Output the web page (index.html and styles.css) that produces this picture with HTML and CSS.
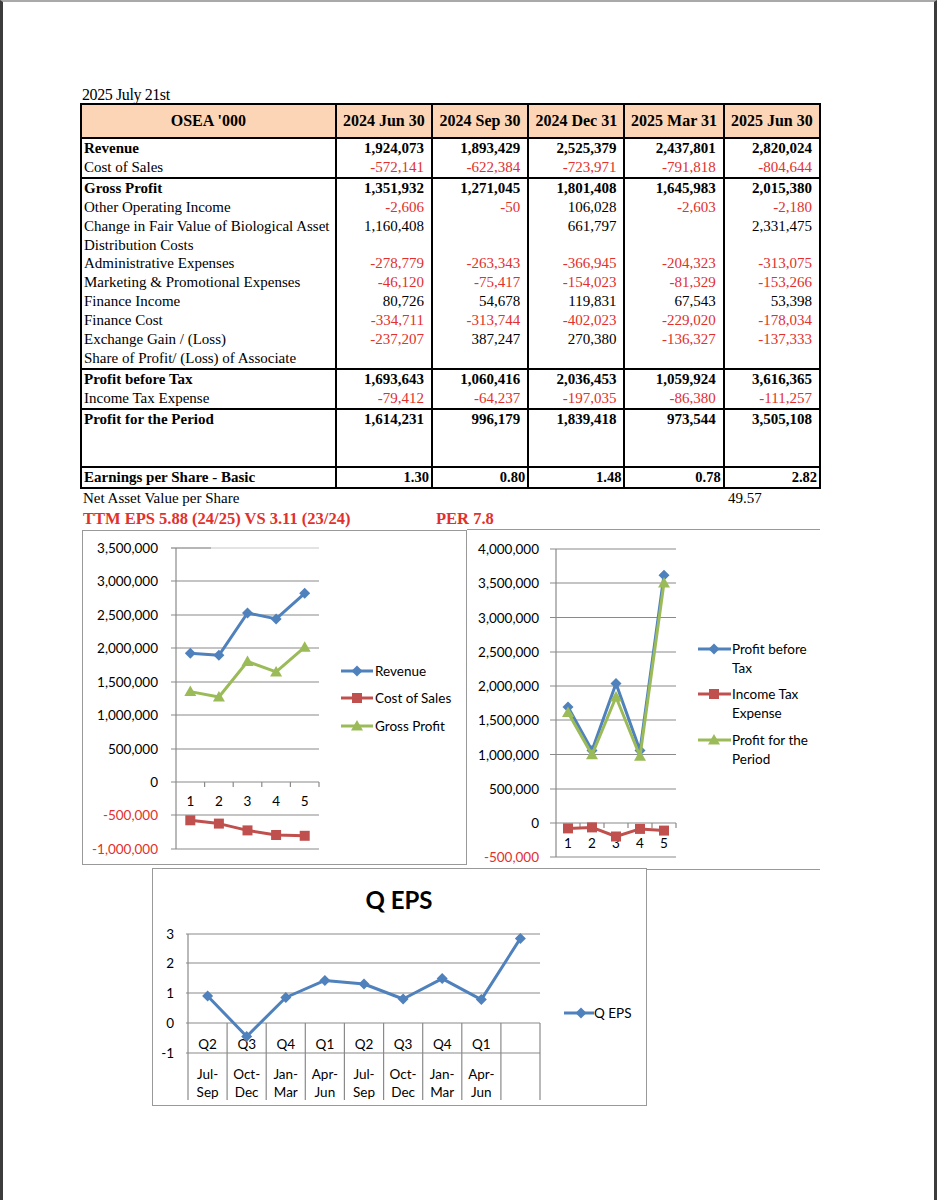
FILE: index.html
```html
<!DOCTYPE html>
<html lang="en">
<head>
    <meta charset="UTF-8">
    <meta name="viewport" content="width=device-width, initial-scale=1.0">
    <title>OSEA Quarterly Results</title>
    <link rel="stylesheet" href="styles.css">
</head>
<body>
<div class="page">
    <div class="sheet">
        <div class="date">2025 July 21st</div>

        <table class="results">
            <colgroup>
                <col class="c-label"><col class="c-q"><col class="c-q"><col class="c-q"><col class="c-q5"><col class="c-q">
            </colgroup>
            <thead>
                <tr>
                    <th>OSEA '000</th>
                    <th>2024 Jun 30</th>
                    <th>2024 Sep 30</th>
                    <th>2024 Dec 31</th>
                    <th>2025 Mar 31</th>
                    <th>2025 Jun 30</th>
                </tr>
            </thead>
            <tbody>
                <tr class="b"><td>Revenue</td><td>1,924,073</td><td>1,893,429</td><td>2,525,379</td><td>2,437,801</td><td>2,820,024</td></tr>
                <tr><td>Cost of Sales</td><td class="neg">-572,141</td><td class="neg">-622,384</td><td class="neg">-723,971</td><td class="neg">-791,818</td><td class="neg">-804,644</td></tr>
            </tbody>
            <tbody>
                <tr class="b"><td>Gross Profit</td><td>1,351,932</td><td>1,271,045</td><td>1,801,408</td><td>1,645,983</td><td>2,015,380</td></tr>
                <tr><td>Other Operating Income</td><td class="neg">-2,606</td><td class="neg">-50</td><td>106,028</td><td class="neg">-2,603</td><td class="neg">-2,180</td></tr>
                <tr><td>Change in Fair Value of Biological Asset</td><td>1,160,408</td><td></td><td>661,797</td><td></td><td>2,331,475</td></tr>
                <tr><td>Distribution Costs</td><td></td><td></td><td></td><td></td><td></td></tr>
                <tr><td>Administrative Expenses</td><td class="neg">-278,779</td><td class="neg">-263,343</td><td class="neg">-366,945</td><td class="neg">-204,323</td><td class="neg">-313,075</td></tr>
                <tr><td>Marketing &amp; Promotional Expenses</td><td class="neg">-46,120</td><td class="neg">-75,417</td><td class="neg">-154,023</td><td class="neg">-81,329</td><td class="neg">-153,266</td></tr>
                <tr><td>Finance Income</td><td>80,726</td><td>54,678</td><td>119,831</td><td>67,543</td><td>53,398</td></tr>
                <tr><td>Finance Cost</td><td class="neg">-334,711</td><td class="neg">-313,744</td><td class="neg">-402,023</td><td class="neg">-229,020</td><td class="neg">-178,034</td></tr>
                <tr><td>Exchange Gain / (Loss)</td><td class="neg">-237,207</td><td>387,247</td><td>270,380</td><td class="neg">-136,327</td><td class="neg">-137,333</td></tr>
                <tr><td>Share of Profit/ (Loss) of Associate</td><td></td><td></td><td></td><td></td><td></td></tr>
            </tbody>
            <tbody>
                <tr class="b"><td>Profit before Tax</td><td>1,693,643</td><td>1,060,416</td><td>2,036,453</td><td>1,059,924</td><td>3,616,365</td></tr>
                <tr><td>Income Tax Expense</td><td class="neg">-79,412</td><td class="neg">-64,237</td><td class="neg">-197,035</td><td class="neg">-86,380</td><td class="neg">-111,257</td></tr>
            </tbody>
            <tbody>
                <tr class="b"><td>Profit for the Period</td><td>1,614,231</td><td>996,179</td><td>1,839,418</td><td>973,544</td><td>3,505,108</td></tr>
                <tr><td></td><td></td><td></td><td></td><td></td><td></td></tr>
                <tr><td></td><td></td><td></td><td></td><td></td><td></td></tr>
            </tbody>
            <tbody>
                <tr class="b eps"><td>Earnings per Share - Basic</td><td>1.30</td><td>0.80</td><td>1.48</td><td>0.78</td><td>2.82</td></tr>
            </tbody>
        </table>

        <div class="nav-row">
            <span class="nav-label">Net Asset Value per Share</span>
            <span>49.57</span>
        </div>
        <div class="ttm-row">
            <span class="ttm">TTM EPS 5.88 (24/25) VS 3.11 (23/24)</span>
            <span>PER 7.8</span>
        </div>

        <div class="chart-row">
            <!-- Revenue / Cost of Sales / Gross Profit -->
            <div class="chart chart-rev">
                <svg width="383" height="333" viewBox="0 0 383 333">
                    <defs>
                        <path id="dia" d="M0 -5.5L5.5 0L0 5.5L-5.5 0Z"/>
                        <path id="sq" d="M-5 -5H5V5H-5Z"/>
                        <path id="tri" d="M0 -6L6 4.5L-6 4.5Z"/>
                    </defs>
                    <g class="grid">
                        <line x1="88" y1="17" x2="236" y2="17" class="faint"/>
                        <line x1="88" y1="50" x2="236" y2="50"/>
                        <line x1="88" y1="84" x2="236" y2="84"/>
                        <line x1="88" y1="117" x2="236" y2="117"/>
                        <line x1="88" y1="151" x2="236" y2="151"/>
                        <line x1="88" y1="184" x2="236" y2="184"/>
                        <line x1="88" y1="218" x2="236" y2="218"/>
                        <line x1="88" y1="251" x2="236" y2="251"/>
                        <line x1="88" y1="284" x2="236" y2="284"/>
                        <line x1="88" y1="318" x2="236" y2="318"/>
                        <line x1="93" y1="17" x2="93" y2="318"/>
                        <line x1="88" y1="17" x2="128" y2="17"/>
                        <line x1="121.6" y1="251" x2="121.6" y2="256"/>
                        <line x1="150.2" y1="251" x2="150.2" y2="256"/>
                        <line x1="178.8" y1="251" x2="178.8" y2="256"/>
                        <line x1="207.4" y1="251" x2="207.4" y2="256"/>
                        <line x1="236" y1="251" x2="236" y2="256"/>
                    </g>
                    <g class="ylab">
                        <text x="75" y="17">3,500,000</text>
                        <text x="75" y="50">3,000,000</text>
                        <text x="75" y="84">2,500,000</text>
                        <text x="75" y="117">2,000,000</text>
                        <text x="75" y="151">1,500,000</text>
                        <text x="75" y="184">1,000,000</text>
                        <text x="75" y="218">500,000</text>
                        <text x="75" y="251">0</text>
                        <text x="75" y="284" class="neg">-500,000</text>
                        <text x="75" y="318" class="neg">-1,000,000</text>
                    </g>
                    <g class="xlab">
                        <text x="107.3" y="270">1</text>
                        <text x="135.9" y="270">2</text>
                        <text x="164.5" y="270">3</text>
                        <text x="193.1" y="270">4</text>
                        <text x="221.7" y="270">5</text>
                    </g>
                    <g class="s-blue">
                        <polyline points="107.3,122.3 135.9,124.3 164.5,82 193.1,87.9 221.7,62.3"/>
                        <use href="#dia" x="107.3" y="122.3"/><use href="#dia" x="135.9" y="124.3"/><use href="#dia" x="164.5" y="82"/><use href="#dia" x="193.1" y="87.9"/><use href="#dia" x="221.7" y="62.3"/>
                    </g>
                    <g class="s-red">
                        <polyline points="107.3,289.3 135.9,292.6 164.5,299.4 193.1,304 221.7,304.8"/>
                        <use href="#sq" x="107.3" y="289.3"/><use href="#sq" x="135.9" y="292.6"/><use href="#sq" x="164.5" y="299.4"/><use href="#sq" x="193.1" y="304"/><use href="#sq" x="221.7" y="304.8"/>
                    </g>
                    <g class="s-green">
                        <polyline points="107.3,160.6 135.9,166 164.5,130.5 193.1,140.9 221.7,116.2"/>
                        <use href="#tri" x="107.3" y="160.6"/><use href="#tri" x="135.9" y="166"/><use href="#tri" x="164.5" y="130.5"/><use href="#tri" x="193.1" y="140.9"/><use href="#tri" x="221.7" y="116.2"/>
                    </g>
                    <g class="legend">
                        <g class="s-blue"><line x1="258" y1="140" x2="290" y2="140"/><use href="#dia" x="274" y="140"/></g>
                        <text x="292" y="140">Revenue</text>
                        <g class="s-red"><line x1="258" y1="167" x2="290" y2="167"/><use href="#sq" x="274" y="167"/></g>
                        <text x="292" y="167">Cost of Sales</text>
                        <g class="s-green"><line x1="258" y1="195" x2="290" y2="195"/><use href="#tri" x="274" y="195"/></g>
                        <text x="292" y="195">Gross Profit</text>
                    </g>
                </svg>
            </div>

            <!-- Profit before Tax / Income Tax / Profit for the Period -->
            <div class="chart chart-profit">
                <svg width="353" height="339" viewBox="0 0 353 339">
                    <g class="grid">
                        <line x1="83" y1="19" x2="209" y2="19"/>
                        <line x1="83" y1="53" x2="209" y2="53"/>
                        <line x1="83" y1="87.5" x2="209" y2="87.5"/>
                        <line x1="83" y1="122" x2="209" y2="122"/>
                        <line x1="83" y1="156" x2="209" y2="156"/>
                        <line x1="83" y1="190" x2="209" y2="190"/>
                        <line x1="83" y1="224.5" x2="209" y2="224.5"/>
                        <line x1="83" y1="259" x2="209" y2="259"/>
                        <line x1="83" y1="293" x2="209" y2="293"/>
                        <line x1="83" y1="327" x2="209" y2="327"/>
                        <line x1="89" y1="19" x2="89" y2="327"/>
                        <line x1="113" y1="293" x2="113" y2="298"/>
                        <line x1="137" y1="293" x2="137" y2="298"/>
                        <line x1="161" y1="293" x2="161" y2="298"/>
                        <line x1="185" y1="293" x2="185" y2="298"/>
                        <line x1="209" y1="293" x2="209" y2="298"/>
                    </g>
                    <g class="ylab">
                        <text x="72" y="19">4,000,000</text>
                        <text x="72" y="53">3,500,000</text>
                        <text x="72" y="87.5">3,000,000</text>
                        <text x="72" y="122">2,500,000</text>
                        <text x="72" y="156">2,000,000</text>
                        <text x="72" y="190">1,500,000</text>
                        <text x="72" y="224.5">1,000,000</text>
                        <text x="72" y="259">500,000</text>
                        <text x="72" y="293">0</text>
                        <text x="72" y="327" class="neg">-500,000</text>
                    </g>
                    <g class="xlab">
                        <text x="101" y="313">1</text>
                        <text x="125" y="313">2</text>
                        <text x="149" y="313">3</text>
                        <text x="173" y="313">4</text>
                        <text x="197" y="313">5</text>
                    </g>
                    <g class="s-blue">
                        <polyline points="101,177 125,220.4 149,153.5 173,220.4 197,45.3"/>
                        <use href="#dia" x="101" y="177"/><use href="#dia" x="125" y="220.4"/><use href="#dia" x="149" y="153.5"/><use href="#dia" x="173" y="220.4"/><use href="#dia" x="197" y="45.3"/>
                    </g>
                    <g class="s-red">
                        <polyline points="101,298.4 125,297.4 149,306.5 173,298.9 197,300.6"/>
                        <use href="#sq" x="101" y="298.4"/><use href="#sq" x="125" y="297.4"/><use href="#sq" x="149" y="306.5"/><use href="#sq" x="173" y="298.9"/><use href="#sq" x="197" y="300.6"/>
                    </g>
                    <g class="s-green">
                        <polyline points="101,182.4 125,224.8 149,167 173,226.3 197,52.9"/>
                        <use href="#tri" x="101" y="182.4"/><use href="#tri" x="125" y="224.8"/><use href="#tri" x="149" y="167"/><use href="#tri" x="173" y="226.3"/><use href="#tri" x="197" y="52.9"/>
                    </g>
                    <g class="legend">
                        <g class="s-blue"><line x1="231" y1="119" x2="264" y2="119"/><use href="#dia" x="247" y="119"/></g>
                        <text x="265" y="119">Profit before</text>
                        <text x="265" y="137.5">Tax</text>
                        <g class="s-red"><line x1="231" y1="164" x2="264" y2="164"/><use href="#sq" x="247" y="164"/></g>
                        <text x="265" y="164">Income Tax</text>
                        <text x="265" y="183">Expense</text>
                        <g class="s-green"><line x1="231" y1="210" x2="264" y2="210"/><use href="#tri" x="247" y="210"/></g>
                        <text x="265" y="210">Profit for the</text>
                        <text x="265" y="229">Period</text>
                    </g>
                </svg>
            </div>
        </div>

        <!-- Quarterly EPS -->
        <div class="chart chart-eps">
            <svg width="493" height="236" viewBox="0 0 493 236">
                <text x="246" y="30" class="title">Q EPS</text>
                <g class="grid">
                    <line x1="33" y1="65" x2="387" y2="65"/>
                    <line x1="33" y1="94" x2="387" y2="94"/>
                    <line x1="33" y1="124" x2="387" y2="124"/>
                    <line x1="33" y1="154" x2="387" y2="154"/>
                    <line x1="33" y1="184" x2="387" y2="184"/>
                    <line x1="35" y1="65" x2="35" y2="231"/>
                    <line x1="74.1" y1="154" x2="74.1" y2="231"/>
                    <line x1="113.2" y1="154" x2="113.2" y2="231"/>
                    <line x1="152.3" y1="154" x2="152.3" y2="231"/>
                    <line x1="191.4" y1="154" x2="191.4" y2="231"/>
                    <line x1="230.6" y1="154" x2="230.6" y2="231"/>
                    <line x1="269.7" y1="154" x2="269.7" y2="231"/>
                    <line x1="308.8" y1="154" x2="308.8" y2="231"/>
                    <line x1="347.9" y1="154" x2="347.9" y2="231"/>
                    <line x1="387" y1="154" x2="387" y2="231"/>
                </g>
                <g class="ylab">
                    <text x="21" y="65">3</text>
                    <text x="21" y="94">2</text>
                    <text x="21" y="124">1</text>
                    <text x="21" y="154">0</text>
                    <text x="21" y="184">-1</text>
                </g>
                <g class="xlab">
                    <text x="54.6" y="175">Q2</text><text x="54.6" y="205">Jul-</text><text x="54.6" y="223">Sep</text>
                    <text x="93.7" y="175">Q3</text><text x="93.7" y="205">Oct-</text><text x="93.7" y="223">Dec</text>
                    <text x="132.8" y="175">Q4</text><text x="132.8" y="205">Jan-</text><text x="132.8" y="223">Mar</text>
                    <text x="171.9" y="175">Q1</text><text x="171.9" y="205">Apr-</text><text x="171.9" y="223">Jun</text>
                    <text x="211" y="175">Q2</text><text x="211" y="205">Jul-</text><text x="211" y="223">Sep</text>
                    <text x="250.1" y="175">Q3</text><text x="250.1" y="205">Oct-</text><text x="250.1" y="223">Dec</text>
                    <text x="289.2" y="175">Q4</text><text x="289.2" y="205">Jan-</text><text x="289.2" y="223">Mar</text>
                    <text x="328.3" y="175">Q1</text><text x="328.3" y="205">Apr-</text><text x="328.3" y="223">Jun</text>
                </g>
                <g class="s-blue">
                    <polyline points="54.6,127 93.7,167.5 132.8,128.5 171.9,111.4 211,115 250.1,130 289.2,109.6 328.3,130.6 367.4,69.4"/>
                    <use href="#dia" x="54.6" y="127"/><use href="#dia" x="93.7" y="167.5"/><use href="#dia" x="132.8" y="128.5"/><use href="#dia" x="171.9" y="111.4"/><use href="#dia" x="211" y="115"/><use href="#dia" x="250.1" y="130"/><use href="#dia" x="289.2" y="109.6"/><use href="#dia" x="328.3" y="130.6"/><use href="#dia" x="367.4" y="69.4"/>
                </g>
                <g class="legend">
                    <g class="s-blue"><line x1="411" y1="144" x2="441" y2="144"/><use href="#dia" x="428" y="144"/></g>
                    <text x="441" y="144">Q EPS</text>
                </g>
            </svg>
        </div>
    </div>
</div>
</body>
</html>
```

FILE: styles.css
```css
body {
    margin: 0;
    background: #fff;
}
.page {
    width: 937px;
    min-height: 1200px;
    box-sizing: border-box;
    border-left: 3px solid #3c3c3c;
    border-right: 3px solid #3c3c3c;
    border-top: 2px solid #a9a9a9;
    font-family: "Liberation Serif", "Times New Roman", serif;
    color: #000;
}
.sheet {
    padding: 85px 0 0 77px;
}
.date {
    font-size: 16px;
    line-height: 16px;
    padding-left: 2px;
    letter-spacing: -0.4px;
}

/* results table */
.results {
    border-collapse: collapse;
    border: 2px solid #000;
    font-size: 15px;
    table-layout: fixed;
    width: 741px;
}
.c-label { width: 254px; }
.c-q { width: 96px; }
.c-q5 { width: 99px; }
.results th {
    background: #fbd5b5;
    height: 32px;
    font-size: 16px;
    font-weight: bold;
    border: 2px solid #000;
    padding: 0;
    white-space: nowrap;
}
.results tbody {
    border-top: 2px solid #000;
}
.results td {
    padding: 0 7px 0 0;
    line-height: 18.9px;
    height: 18.9px;
    text-align: right;
    border-left: 2px solid #000;
    white-space: nowrap;
    overflow: hidden;
}
.results td:first-child {
    text-align: left;
    padding: 0 0 0 2px;
}
.results .b td {
    font-weight: bold;
}
.results .eps td {
    font-size: 14.5px;
    padding-right: 2px;
}
.results .eps td:first-child {
    font-size: 15px;
    padding-right: 0;
}
.neg {
    color: #e2302c;
}

.nav-row {
    display: flex;
    font-size: 15px;
    line-height: 19px;
    padding-left: 3px;
}
.nav-label {
    width: 645px;
}
.ttm-row {
    display: flex;
    color: #e2302c;
    font-weight: bold;
    font-size: 16.5px;
    line-height: 22px;
    padding-left: 3px;
}
.ttm {
    width: 353px;
}

/* charts */
.chart-row {
    display: flex;
    margin-left: 2px;
}
.chart {
    font-family: Lato, "Open Sans", sans-serif;
}
.chart svg {
    display: block;
}
.chart-rev {
    border: 1px solid #999;
    width: 383px;
    height: 333px;
}
.chart-profit {
    border-top: 1px solid #999;
    border-bottom: 1px solid #999;
    width: 353px;
    height: 339px;
    margin-top: -1px;
}
.chart-eps {
    border: 1px solid #999;
    width: 493px;
    height: 236px;
    margin: -2px 0 0 72px;
    background: #fff;
    position: relative;
}
.grid line {
    stroke: #8a8a8a;
    stroke-width: 1.2;
}
.grid line.faint {
    stroke: #c8c8c8;
}
.ylab text {
    font-size: 13.5px;
    text-anchor: end;
    dominant-baseline: central;
}
.xlab text {
    font-size: 13.5px;
    text-anchor: middle;
    dominant-baseline: central;
}
.legend text {
    font-size: 13.5px;
    dominant-baseline: central;
}
.chart text.neg {
    fill: #e2302c;
}
.title {
    font-size: 24px;
    font-weight: bold;
    text-anchor: middle;
    dominant-baseline: central;
}
polyline, .legend line {
    fill: none;
    stroke-width: 3;
    stroke-linejoin: round;
}
.s-blue polyline, .s-blue line { stroke: #4f81bd; }
.s-blue use { fill: #4f81bd; }
.s-red polyline, .s-red line { stroke: #c0504d; }
.s-red use { fill: #c0504d; }
.s-green polyline, .s-green line { stroke: #9bbb59; }
.s-green use { fill: #9bbb59; }
```
